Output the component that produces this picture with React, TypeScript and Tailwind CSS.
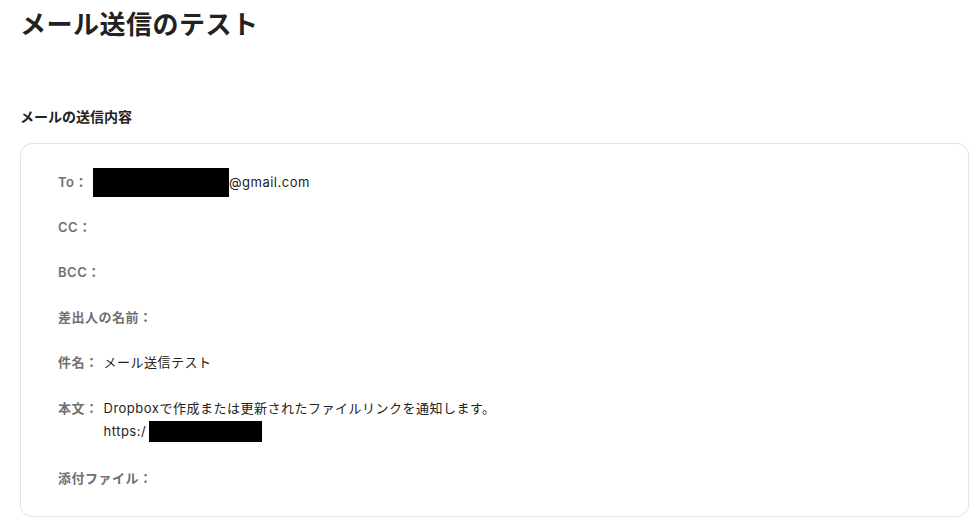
const font = { fontFamily: 'Inter, "Noto Sans CJK JP", sans-serif' };

interface Row {
  label: string;
  value?: React.ReactNode;
  extra?: string;
}

const rows: Row[] = [
  {
    label: 'To：',
    value: (
      <span className="flex items-center">
        <span className="inline-block w-[136px] h-[29px] -my-[4px] bg-black" />
        <span>@gmail.com</span>
      </span>
    ),
  },
  { label: 'CC：' },
  { label: 'BCC：' },
  { label: '差出人の名前：' },
  { label: '件名：', value: 'メール送信テスト' },
  {
    label: '本文：',
    extra: 'pt-[1px]',
    value: (
      <div className="leading-[23px]">
        <div>Dropboxで作成または更新されたファイルリンクを通知します。</div>
        <div className="flex items-center">
          <span>https:/</span>
          <span className="inline-block ml-[3px] w-[113px] h-[21px] bg-black" />
        </div>
      </div>
    ),
  },
  { label: '添付ファイル：', extra: 'pt-[1px]' },
];

const App = () => {
  return (
    <div className="min-h-screen bg-white text-[#222]" style={font}>
      <div className="px-5 pt-[8px]">
        <h1 className="text-[26px] leading-[34px] tracking-[0.5px] font-bold text-[#222]">メール送信のテスト</h1>
        <h2 className="mt-[65px] text-[14px] leading-[20px] font-bold text-[#222]">メールの送信内容</h2>
        <div className="mt-[16px] w-[949px] rounded-xl border border-[#e3e3e3] pl-[37px] pr-6 pt-[27px] pb-[27px]">
          <div className="flex flex-col gap-[23px]">
            {rows.map((row) => (
              <div key={row.label} className={`flex items-start text-[13px] leading-[22px] tracking-[0.5px] ${row.extra ?? ''}`}>
                <span className="font-semibold text-[#707070] mr-[5px]">{row.label}</span>
                {row.value && <div className="text-[#222]">{row.value}</div>}
              </div>
            ))}
          </div>
        </div>
      </div>
    </div>
  );
};

export default App;
